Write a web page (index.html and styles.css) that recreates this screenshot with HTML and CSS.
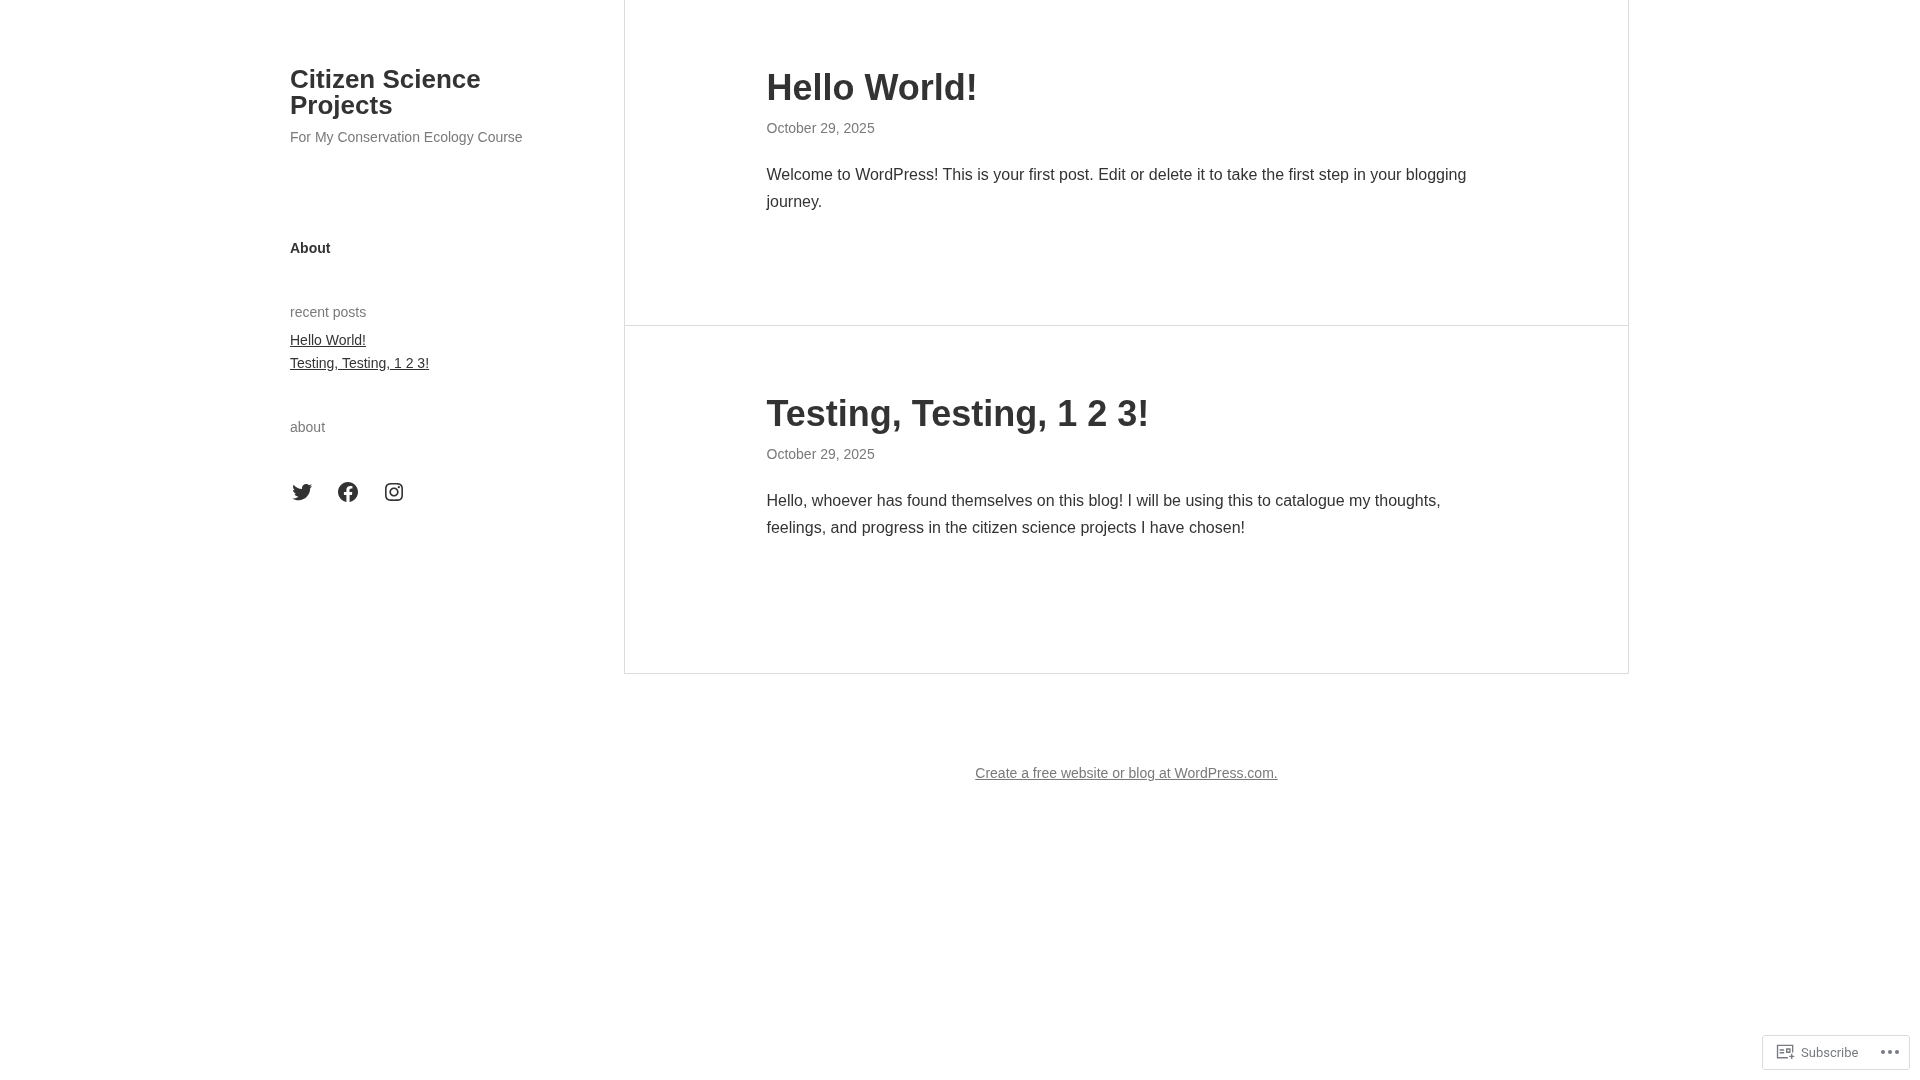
FILE: index.html
```html
<!DOCTYPE html>
<html lang="en">
<head>
<meta charset="utf-8">
<title>Citizen Science Projects</title>
<link rel="stylesheet" href="styles.css">
</head>
<body>
<div class="page">
  <aside class="sidebar">
    <h1 class="site-title">Citizen Science Projects</h1>
    <p class="tagline">For My Conservation Ecology Course</p>
    <nav class="nav"><a href="#">About</a></nav>
    <section class="widget">
      <h2 class="widget-title">recent posts</h2>
      <ul class="recent">
        <li><a href="#">Hello World!</a></li>
        <li><a href="#">Testing, Testing, 1 2 3!</a></li>
      </ul>
    </section>
    <section class="widget widget-about">
      <h2 class="widget-title">about</h2>
    </section>
    <div class="social">
      <svg viewBox="0 0 24 24" width="24" height="24"><path d="M22.23 5.924c-.736.326-1.527.547-2.357.646.847-.508 1.498-1.312 1.804-2.27-.793.47-1.67.812-2.606.996C18.325 4.498 17.258 4 16.078 4c-2.266 0-4.103 1.837-4.103 4.103 0 .322.036.635.106.935-3.41-.17-6.433-1.804-8.457-4.287-.353.607-.556 1.312-.556 2.064 0 1.424.724 2.68 1.825 3.415-.673-.022-1.305-.207-1.86-.514v.052c0 1.988 1.415 3.647 3.293 4.023-.344.095-.707.145-1.08.145-.265 0-.522-.026-.773-.074.522 1.63 2.038 2.817 3.833 2.85-1.404 1.1-3.174 1.757-5.096 1.757-.332 0-.66-.02-.98-.057 1.816 1.164 3.973 1.843 6.29 1.843 7.547 0 11.675-6.252 11.675-11.675 0-.178-.004-.355-.012-.53.802-.578 1.497-1.3 2.047-2.12z"/></svg>
      <svg viewBox="0 0 24 24" width="24" height="24"><path d="M12 2C6.5 2 2 6.5 2 12c0 5 3.7 9.1 8.4 9.9v-7H7.9V12h2.5V9.8c0-2.5 1.5-3.9 3.8-3.9 1.1 0 2.2.2 2.2.2v2.5h-1.3c-1.2 0-1.6.8-1.6 1.6V12h2.8l-.4 2.9h-2.3v7C18.3 21.1 22 17 22 12c0-5.5-4.5-10-10-10z"/></svg>
      <svg viewBox="0 0 24 24" width="24" height="24"><path d="M12,4.622c2.403,0,2.688,0.009,3.637,0.052c0.877,0.04,1.354,0.187,1.671,0.31c0.42,0.163,0.72,0.358,1.035,0.673 c0.315,0.315,0.51,0.615,0.673,1.035c0.123,0.317,0.27,0.794,0.31,1.671c0.043,0.949,0.052,1.234,0.052,3.637 s-0.009,2.688-0.052,3.637c-0.04,0.877-0.187,1.354-0.31,1.671c-0.163,0.42-0.358,0.72-0.673,1.035 c-0.315,0.315-0.615,0.51-1.035,0.673c-0.317,0.123-0.794,0.27-1.671,0.31c-0.949,0.043-1.234,0.052-3.637,0.052 s-2.688-0.009-3.637-0.052c-0.877-0.04-1.354-0.187-1.671-0.31c-0.42-0.163-0.72-0.358-1.035-0.673 c-0.315-0.315-0.51-0.615-0.673-1.035c-0.123-0.317-0.27-0.794-0.31-1.671C4.631,14.688,4.622,14.403,4.622,12 s0.009-2.688,0.052-3.637c0.04-0.877,0.187-1.354,0.31-1.671c0.163-0.42,0.358-0.72,0.673-1.035 c0.315-0.315,0.615-0.51,1.035-0.673c0.317-0.123,0.794-0.27,1.671-0.31C9.312,4.631,9.597,4.622,12,4.622 M12,3 C9.556,3,9.249,3.01,8.289,3.054C7.331,3.098,6.677,3.25,6.105,3.472C5.513,3.702,5.011,4.01,4.511,4.511 c-0.5,0.5-0.808,1.002-1.038,1.594C3.25,6.677,3.098,7.331,3.054,8.289C3.01,9.249,3,9.556,3,12c0,2.444,0.01,2.751,0.054,3.711 c0.044,0.958,0.196,1.612,0.418,2.185c0.23,0.592,0.538,1.094,1.038,1.594c0.5,0.5,1.002,0.808,1.594,1.038 c0.572,0.222,1.227,0.375,2.185,0.418C9.249,20.99,9.556,21,12,21s2.751-0.01,3.711-0.054c0.958-0.044,1.612-0.196,2.185-0.418 c0.592-0.23,1.094-0.538,1.594-1.038c0.5-0.5,0.808-1.002,1.038-1.594c0.222-0.572,0.375-1.227,0.418-2.185 C20.99,14.751,21,14.444,21,12s-0.01-2.751-0.054-3.711c-0.044-0.958-0.196-1.612-0.418-2.185c-0.23-0.592-0.538-1.094-1.038-1.594 c-0.5-0.5-1.002-0.808-1.594-1.038c-0.572-0.222-1.227-0.375-2.185-0.418C14.751,3.01,14.444,3,12,3L12,3z M12,7.378 c-2.552,0-4.622,2.069-4.622,4.622S9.448,16.622,12,16.622s4.622-2.069,4.622-4.622S14.552,7.378,12,7.378z M12,15 c-1.657,0-3-1.343-3-3s1.343-3,3-3s3,1.343,3,3S13.657,15,12,15z M16.804,6.116c-0.596,0-1.08,0.484-1.08,1.08 s0.484,1.08,1.08,1.08c0.596,0,1.08-0.484,1.08-1.08S17.401,6.116,16.804,6.116z"/></svg>
    </div>
  </aside>
  <div class="content">
    <main class="posts">
      <article class="post">
        <h2 class="post-title">Hello World!</h2>
        <p class="post-date">October 29, 2025</p>
        <p class="post-text">Welcome to WordPress! This is your first post. Edit or delete it to take the first step in your blogging journey.</p>
      </article>
      <article class="post post-last">
        <h2 class="post-title">Testing, Testing, 1 2 3!</h2>
        <p class="post-date">October 29, 2025</p>
        <p class="post-text">Hello, whoever has found themselves on this blog! I will be using this to catalogue my thoughts, feelings, and progress in the citizen science projects I have chosen!</p>
      </article>
    </main>
    <footer class="footer"><a href="#">Create a free website or blog at WordPress.com.</a></footer>
  </div>
</div>
<div class="actionbar">
  <span class="sub">
    <svg viewBox="0 0 24 24" width="22" height="22"><path d="M19 14v2h2v1.5h-2v2h-1.5v-2h-2V16h2v-2H19zM20 4v8.5h-1.5V5.5h-15v12H14V19H2V4h18zM10 9v1.5H5V9h5zm7-1v5h-5V8h5zm-1.5 1.5h-2v2h2v-2zM10 12v1.5H5V12h5z"/></svg>
    <span>Subscribe</span>
  </span>
  <span class="dots"><i></i><i></i><i></i></span>
</div>
</body>
</html>
```
FILE: styles.css
```css
* { box-sizing: border-box; }
html, body { margin: 0; padding: 0; background: #fff; }
body { font-family: "Liberation Sans", Arial, sans-serif; color: #333; font-size: 16px; }
a { color: inherit; }
.page { display: flex; align-items: flex-start; padding-left: 290px; will-change: transform; }
.sidebar { width: 334px; flex: none; padding: 66px 50px 0 0; }
.site-title { margin: 0; font-size: 26px; line-height: 26px; font-weight: 700; color: #333; }
.tagline { margin: 9px 0 0; font-size: 14px; line-height: 20px; color: #7a7a7a; }
.nav { margin-top: 91px; font-size: 14px; line-height: 20px; font-weight: 700; }
.nav a { text-decoration: none; }
.widget { margin-top: 44px; }
.widget-about { margin-top: 42px; }
.widget-title { margin: 0; font-size: 14px; line-height: 20px; font-weight: 400; color: #7a7a7a; }
.recent { list-style: none; margin: 7px 0 0; padding: 0; font-size: 14px; line-height: 23px; }
.social { display: flex; gap: 22px; margin-top: 43px; }
.social svg { display: block; fill: #333; }
.content { width: 1005px; flex: none; }
.posts { border: 1px solid #dcdcdc; border-top: 0; }
.post { height: 326px; padding: 67px 140px 0 141.5px; border-bottom: 1px solid #dcdcdc; }
.post-last { height: 347px; border-bottom: 0; }
.post-title { margin: 0; font-size: 36px; line-height: 42px; font-weight: 700; color: #333; }
.post-date { margin: 9px 0 0; font-size: 14px; line-height: 20px; color: #7a7a7a; }
.post-text { margin: 23px 0 0; font-size: 16px; line-height: 27px; color: #333; }
.footer { margin-top: 89px; text-align: center; font-size: 14px; line-height: 20px; color: #7a7a7a; }
.actionbar { position: fixed; right: 10px; bottom: 10px; width: 148px; height: 35px; display: flex; align-items: center; justify-content: space-between; padding: 0 10px 2px 12px; background: #fff; border: 1px solid #dcdcde; border-radius: 3px; font-family: Roboto, "Liberation Sans", sans-serif; font-size: 13px; color: #787c82; }
.sub { display: flex; align-items: center; gap: 4px; will-change: transform; }
.sub svg { display: block; fill: #787c82; }
.dots { display: flex; gap: 3px; }
.dots i { display: block; width: 4px; height: 4px; border-radius: 50%; background: #787c82; }
```
